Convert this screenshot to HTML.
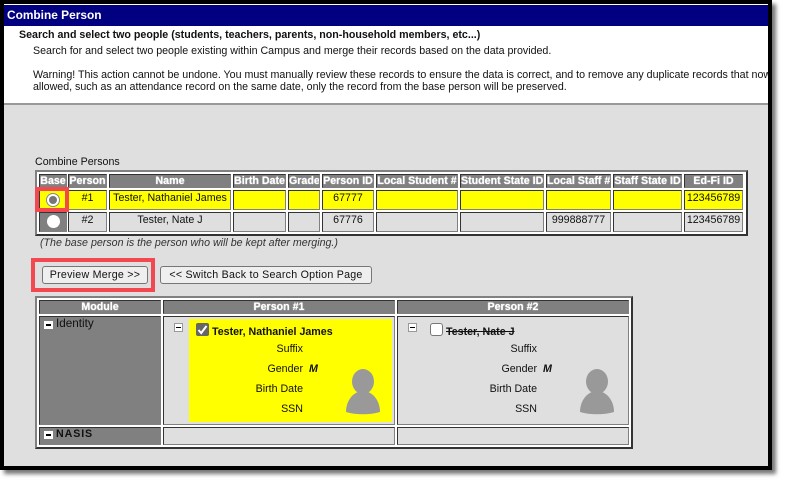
<!DOCTYPE html>
<html><head><meta charset="utf-8">
<style>
html,body{margin:0;padding:0;background:#fff;}
body{width:787px;height:485px;overflow:hidden;position:relative;font-family:"Liberation Sans",sans-serif;font-size:10.67px;color:#111;}
div,span.a{position:absolute;box-sizing:border-box;}
.t{white-space:nowrap;line-height:12px;height:12px;}
.c{text-align:center;}
.r{text-align:right;}
.tb{background:#fff;border:2px solid;border-color:#808080 #333 #333 #808080;}
.cell{border:1px solid;border-color:#333 #808080 #808080 #333;background:#dfdfdf;}
.y{background:#ff0;}
.h{background:#808080;border-color:#333 #808080 #808080 #333;color:#fff;font-weight:bold;text-align:center;line-height:13px;white-space:nowrap;overflow:hidden;text-shadow:0 0 1px #fff;}
.g{background:#808080;}
.btn{background:#efefef;border:1px solid #767676;border-radius:3px;text-align:center;line-height:17px;white-space:nowrap;font-size:10.67px;letter-spacing:.25px;}
.red{border:4px solid #f2484f;}
.mb{width:9px;height:9px;background:#fff;border:1px solid #999;}
.mb:after{content:"";position:absolute;left:1px;top:3px;width:5px;height:1px;background:#000;}
.mw{width:9px;height:8px;background:#fff;}
.mw:after{content:"";position:absolute;left:2px;top:3px;width:5px;height:2px;background:#000;}
.rw{line-height:14px;}
</style></head>
<body>
<div style="left:0;top:0;width:772px;height:470px;background:#000;box-shadow:4px 4px 4px #777;"></div>
<div style="left:4px;top:4px;width:764px;height:462px;background:#dfdfdf;overflow:hidden;">
  <div style="left:0;top:0;width:764px;height:1px;background:#fff;"></div>
  <div style="left:0;top:1px;width:764px;height:21px;background:#000080;"></div>
  <div style="left:0;top:22px;width:764px;height:77px;background:#fff;"></div>
  <div style="left:0;top:99px;width:764px;height:2px;background:#999;"></div>
  <div class="t" style="left:3px;top:5px;color:#fff;font-weight:bold;font-size:11.9px;">Combine Person</div>
  <div class="t" style="left:15px;top:25px;font-weight:bold;font-size:10.67px;">Search and select two people (students, teachers, parents, non-household members, etc...)</div>
  <div class="t" style="left:29px;top:41px;">Search for and select two people existing within Campus and merge their records based on the data provided.</div>
  <div class="t" style="left:29px;top:65px;">Warning! This action cannot be undone. You must manually review these records to ensure the data is correct, and to remove any duplicate records that now</div>
  <div class="t" style="left:29px;top:77px;">allowed, such as an attendance record on the same date, only the record from the base person will be preserved.</div>
</div>

<div class="t" style="left:35px;top:156px;">Combine Persons</div>

<!-- Table 1 -->
<div class="tb" style="left:35px;top:170px;width:713px;height:66px;"></div>
<div class="cell h" style="left:39px;top:174px;width:28px;height:14px;">Base</div>
<div class="cell h" style="left:68px;top:174px;width:39px;height:14px;">Person</div>
<div class="cell h" style="left:109px;top:174px;width:122px;height:14px;">Name</div>
<div class="cell h" style="left:233px;top:174px;width:53px;height:14px;">Birth Date</div>
<div class="cell h" style="left:288px;top:174px;width:32px;height:14px;">Grade</div>
<div class="cell h" style="left:322px;top:174px;width:52px;height:14px;">Person ID</div>
<div class="cell h" style="left:376px;top:174px;width:82px;height:14px;">Local Student #</div>
<div class="cell h" style="left:460px;top:174px;width:84px;height:14px;">Student State ID</div>
<div class="cell h" style="left:546px;top:174px;width:65px;height:14px;">Local Staff #</div>
<div class="cell h" style="left:613px;top:174px;width:69px;height:14px;">Staff State ID</div>
<div class="cell h" style="left:684px;top:174px;width:59px;height:14px;">Ed-Fi ID</div>

<div class="cell y" style="left:39px;top:190px;width:28px;height:20px;"></div>
<div class="cell y t c rw" style="left:68px;top:190px;width:39px;height:20px;">#1</div>
<div class="cell y t c rw" style="left:109px;top:190px;width:122px;height:20px;">Tester, Nathaniel James</div>
<div class="cell y" style="left:233px;top:190px;width:53px;height:20px;"></div>
<div class="cell y" style="left:288px;top:190px;width:32px;height:20px;"></div>
<div class="cell y t c rw" style="left:322px;top:190px;width:52px;height:20px;">67777</div>
<div class="cell y" style="left:376px;top:190px;width:82px;height:20px;"></div>
<div class="cell y" style="left:460px;top:190px;width:84px;height:20px;"></div>
<div class="cell y" style="left:546px;top:190px;width:65px;height:20px;"></div>
<div class="cell y" style="left:613px;top:190px;width:69px;height:20px;"></div>
<div class="cell y t c rw" style="left:684px;top:190px;width:59px;height:20px;">123456789</div>

<div class="cell g" style="left:39px;top:212px;width:28px;height:20px;"></div>
<div class="cell t c rw" style="left:68px;top:212px;width:39px;height:20px;">#2</div>
<div class="cell t c rw" style="left:109px;top:212px;width:122px;height:20px;">Tester, Nate J</div>
<div class="cell" style="left:233px;top:212px;width:53px;height:20px;"></div>
<div class="cell" style="left:288px;top:212px;width:32px;height:20px;"></div>
<div class="cell t c rw" style="left:322px;top:212px;width:52px;height:20px;">67776</div>
<div class="cell" style="left:376px;top:212px;width:82px;height:20px;"></div>
<div class="cell" style="left:460px;top:212px;width:84px;height:20px;"></div>
<div class="cell t c rw" style="left:546px;top:212px;width:65px;height:20px;">999888777</div>
<div class="cell" style="left:613px;top:212px;width:69px;height:20px;"></div>
<div class="cell t c rw" style="left:684px;top:212px;width:59px;height:20px;">123456789</div>

<!-- Radios -->
<div style="left:46px;top:193px;width:14px;height:14px;border-radius:50%;background:#fff;border:1px solid #888;"></div>
<div style="left:49px;top:196px;width:8px;height:8px;border-radius:50%;background:#777;"></div>
<div style="left:47px;top:215px;width:13px;height:13px;border-radius:50%;background:#fff;"></div>
<div class="red" style="left:35px;top:187px;width:34px;height:25px;"></div>

<div class="t" style="left:40px;top:236.5px;font-style:italic;color:#333;font-size:10.67px;">(The base person is the person who will be kept after merging.)</div>

<!-- Buttons -->
<div class="btn" style="left:42px;top:266px;width:106px;height:18px;">Preview Merge &gt;&gt;</div>
<div class="btn" style="left:160px;top:266px;width:212px;height:18px;">&lt;&lt; Switch Back to Search Option Page</div>
<div class="red" style="left:31px;top:258px;width:124px;height:34px;"></div>

<!-- Table 2 -->
<div class="tb" style="left:35px;top:296px;width:598px;height:153px;"></div>
<div class="cell h" style="left:39px;top:300px;width:122px;height:14px;">Module</div>
<div class="cell h" style="left:163px;top:300px;width:232px;height:14px;">Person #1</div>
<div class="cell h" style="left:397px;top:300px;width:232px;height:14px;">Person #2</div>

<div class="cell g" style="left:39px;top:316px;width:122px;height:109px;"></div>
<div class="cell" style="left:163px;top:316px;width:232px;height:109px;"></div>
<div class="cell" style="left:397px;top:316px;width:232px;height:109px;"></div>
<div class="cell g" style="left:39px;top:427px;width:122px;height:18px;"></div>
<div class="cell" style="left:163px;top:427px;width:232px;height:18px;"></div>
<div class="cell" style="left:397px;top:427px;width:232px;height:18px;"></div>

<div class="mw" style="left:44px;top:321px;"></div>
<div class="t" style="left:56px;top:318px;font-size:11.7px;">Identity</div>
<div class="mw" style="left:44px;top:431px;"></div>
<div class="t" style="left:56px;top:428px;font-size:10.67px;font-weight:bold;letter-spacing:.9px;">NASIS</div>

<div class="y" style="left:189px;top:319px;width:203px;height:103px;"></div>
<div class="mb" style="left:174px;top:323px;"></div>
<div class="mb" style="left:408px;top:323px;"></div>

<!-- Checkbox 1 -->
<div style="left:196px;top:323px;width:13px;height:13px;border-radius:2px;background:#666;"></div>
<svg style="position:absolute;left:196px;top:323px;" width="13" height="13" viewBox="0 0 13 13"><path d="M2.5 7 L5.2 10 L10.5 3" fill="none" stroke="#fff" stroke-width="2"/></svg>
<div class="t" style="left:212px;top:326px;font-weight:bold;font-size:10.67px;">Tester, Nathaniel James</div>

<!-- Checkbox 2 -->
<div style="left:430px;top:323px;width:13px;height:13px;border-radius:3px;background:#fff;border:1px solid #777;"></div>
<div class="t" style="left:446px;top:326px;font-weight:bold;font-size:10.67px;text-decoration:line-through;">Tester, Nate J</div>

<!-- Labels 1 -->
<div class="t r" style="left:240px;top:343px;width:63px;">Suffix</div>
<div class="t r" style="left:240px;top:363px;width:63px;">Gender</div>
<div class="t" style="left:309px;top:363px;font-weight:bold;font-style:italic;">M</div>
<div class="t r" style="left:240px;top:383px;width:63px;">Birth Date</div>
<div class="t r" style="left:240px;top:403px;width:63px;">SSN</div>

<!-- Labels 2 -->
<div class="t r" style="left:474px;top:343px;width:63px;">Suffix</div>
<div class="t r" style="left:474px;top:363px;width:63px;">Gender</div>
<div class="t" style="left:543px;top:363px;font-weight:bold;font-style:italic;">M</div>
<div class="t r" style="left:474px;top:383px;width:63px;">Birth Date</div>
<div class="t r" style="left:474px;top:403px;width:63px;">SSN</div>

<!-- Avatars -->
<svg style="position:absolute;left:346px;top:369px;" width="34" height="46" viewBox="0 0 34 46"><ellipse cx="17" cy="12.5" rx="11" ry="12.5" fill="#999"/><path d="M0 43 C0 31 8 22 17 22 C26 22 34 31 34 43 C24 46 10 46 0 43 Z" fill="#999"/></svg>
<svg style="position:absolute;left:580px;top:369px;" width="34" height="46" viewBox="0 0 34 46"><ellipse cx="17" cy="12.5" rx="11" ry="12.5" fill="#999"/><path d="M0 43 C0 31 8 22 17 22 C26 22 34 31 34 43 C24 46 10 46 0 43 Z" fill="#999"/></svg>
</body></html>
